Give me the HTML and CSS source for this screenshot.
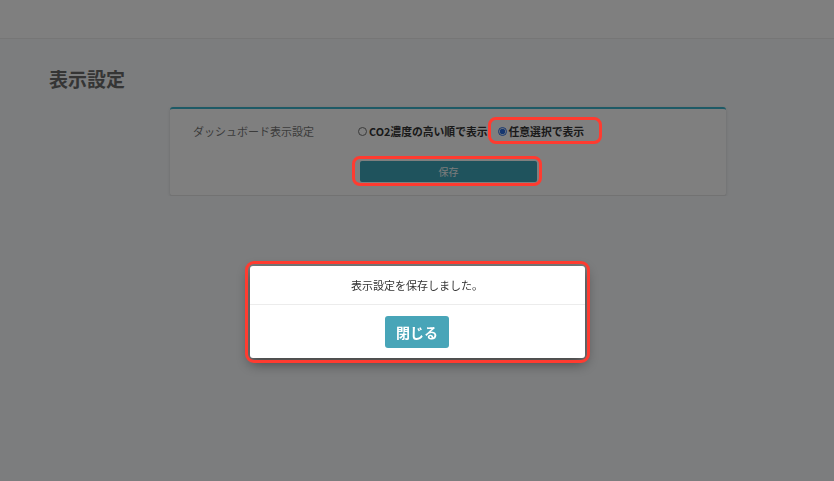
FILE: index.html
```html
<!DOCTYPE html>
<html lang="ja">
<head>
  <meta charset="UTF-8">
  <meta name="viewport" content="width=device-width, initial-scale=1.0">
  <title>表示設定</title>
  <link rel="stylesheet" href="styles.css">
</head>
<body>
  <header class="topbar"></header>

  <main class="content">
    <h1 class="page-title">表示設定</h1>

    <div class="card">
      <div class="setting-row">
        <span class="setting-label">ダッシュボード表示設定</span>
        <label class="radio">
          <input type="radio" name="order" value="co2">
          CO2濃度の高い順で表示
        </label>
        <label class="radio mark">
          <input type="radio" name="order" value="custom" checked>
          任意選択で表示
        </label>
      </div>
      <div class="save-row">
        <button class="save-btn mark">保存</button>
      </div>
    </div>
  </main>

  <!-- Modal after saving -->
  <div class="backdrop"></div>
  <div class="modal-wrap">
    <div class="modal mark">
      <div class="modal-body">表示設定を保存しました。</div>
      <div class="modal-footer">
        <button class="close-btn">閉じる</button>
      </div>
    </div>
  </div>
</body>
</html>
```

FILE: styles.css
```css
body {
  margin: 0;
  font-family: 'Noto Sans CJK JP', 'Noto Sans', sans-serif;
  background-color: #f8fafc;
  color: #333;
  overflow: hidden;
}

.topbar {
  height: 38px;
  background-color: #fff;
  border-bottom: 1px solid #ececec;
}

.content {
  padding-top: 28px;
}

.page-title {
  margin: 0 0 16px 49px;
  font-size: 19px;
  font-weight: bold;
  color: #6a6a6a;
  line-height: 24px;
}

.card {
  margin-left: 170px;
  width: 556px;
  background-color: #fff;
  border-top: 2px solid #3cb4cc;
  border-bottom: 1px solid #e4e4e4;
  border-radius: 3px;
  box-shadow: 0 1px 3px rgba(0, 0, 0, 0.15);
  padding: 14px 0 13px;
}

.setting-row {
  display: flex;
  align-items: center;
  height: 16px;
  padding-left: 23px;
}

.setting-label {
  width: 165px;
  font-size: 11px;
  color: #777;
}

.radio {
  position: relative;
  display: flex;
  align-items: center;
  line-height: 16px;
  font-size: 10.8px;
  font-weight: bold;
  color: #333;
  margin-right: 10px;
}

.radio input {
  width: 9px;
  height: 9px;
  margin: 0 2px 0 0;
  accent-color: #2a6de0;
}

.save-row {
  display: flex;
  justify-content: center;
  padding-top: 22px;
  padding-left: 1px;
}

.save-btn {
  position: relative;
  width: 177px;
  height: 21px;
  border: none;
  border-radius: 2px;
  background-color: #3ea6ba;
  color: #f4f8f9;
  font-family: inherit;
  font-size: 10px;
}

/* dark layer over the page */
.backdrop {
  position: fixed;
  inset: 0;
  background-color: rgba(0, 0, 0, 0.5);
  z-index: 10;
}

.modal-wrap {
  position: fixed;
  inset: 0;
  z-index: 20;
  display: flex;
  justify-content: center;
  align-items: flex-start;
  padding-top: 266px;
}

.modal {
  position: relative;
  width: 335px;
  background-color: #fff;
  border-radius: 3px;
  box-shadow: 0 5px 14px rgba(0, 0, 0, 0.5);
}

.modal-body {
  height: 38px;
  line-height: 38px;
  text-align: center;
  font-size: 11px;
  color: #333;
  border-bottom: 1px solid #ececec;
}

.modal-footer {
  display: flex;
  justify-content: center;
  padding: 11px 0 10px;
}

.close-btn {
  width: 64px;
  height: 32px;
  border: none;
  border-radius: 3px;
  background-color: #48a5b8;
  color: #fff;
  font-family: inherit;
  font-size: 14px;
  font-weight: bold;
}

/* red highlight rings */
.mark::after {
  content: "";
  position: absolute;
  inset: -5px -5px -4px -8px;
  border: 3px solid #ff3b30;
  border-radius: 8px;
  z-index: 30;
  pointer-events: none;
}

.radio.mark::after {
  inset: -6px -18px -5px -10px;
}

.modal.mark::after {
  inset: -5px;
  border-radius: 9px;
}
```
